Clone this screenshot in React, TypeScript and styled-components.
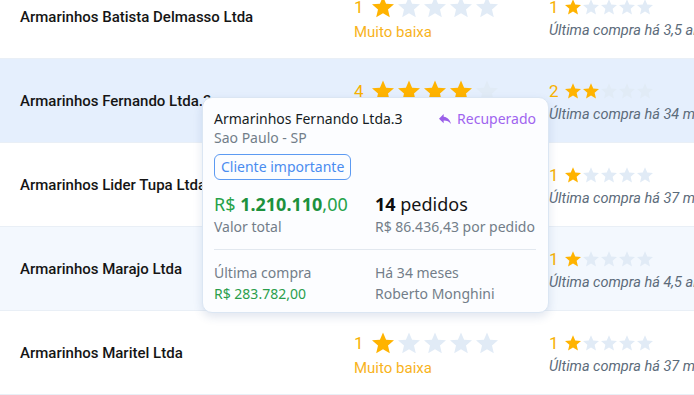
import React from 'react'
import styled, { createGlobalStyle } from 'styled-components'

const GlobalStyle = createGlobalStyle`
  html, body {
    margin: 0;
    padding: 0;
    background: #ffffff;
    overflow: hidden;
  }
  body {
    font-family: Roboto, 'Liberation Sans', sans-serif;
  }
`

const ORANGE = '#f7b100'
const STAR_OFF = '#e1ebf6'

const List = styled.div`
  margin-top: -25px;
  width: 694px;
`

const Row = styled.div<{ $bg: string }>`
  position: relative;
  display: grid;
  grid-template-columns: 334px 195px 1fr;
  align-items: center;
  height: 84px;
  box-sizing: border-box;
  padding-left: 20px;
  background: ${(p) => p.$bg};
  border-bottom: 1px solid #e9eff6;
  white-space: nowrap;
`

const Name = styled.div`
  font-size: 15px;
  font-weight: 500;
  color: #151515;
`

const Rating = styled.div`
  display: flex;
  flex-direction: column;
  gap: 5px;
  margin-top: 4px;
`

const StarLine = styled.div<{ $gap: number }>`
  display: flex;
  align-items: center;
  gap: ${(p) => p.$gap}px;
`

const Num = styled.span<{ $size: number }>`
  font-size: ${(p) => p.$size}px;
  color: ${ORANGE};
  margin-right: 4px;
  line-height: 1;
`

const Label = styled.div`
  font-size: 15px;
  color: #f8b31c;
`

const LastBuy = styled.div`
  display: flex;
  flex-direction: column;
  gap: 6px;
  margin-top: 4px;
  overflow: hidden;
`

const Italic = styled.div`
  font-size: 14.5px;
  font-style: italic;
  color: #5c6b7a;
`

const Star = ({ on, size }: { on: boolean; size: number }) => (
  <svg width={size} height={size} viewBox="2 2 20 19.3" style={{ display: 'block' }}>
    <path
      d="M12 17.27L18.18 21l-1.64-7.03L22 9.24l-7.19-.61L12 2 9.19 8.63 2 9.24l5.46 4.73L5.82 21z"
      fill={on ? '#ffb300' : STAR_OFF}
    />
  </svg>
)

const Stars = ({ n, size, gap, numSize }: { n: number; size: number; gap: number; numSize: number }) => (
  <StarLine $gap={gap}>
    <Num $size={numSize}>{n}</Num>
    {[1, 2, 3, 4, 5].map((i) => (
      <Star key={i} on={i <= n} size={size} />
    ))}
  </StarLine>
)

/* tooltip */

const Tip = styled.div`
  position: absolute;
  left: 202px;
  top: 38px;
  z-index: 5;
  width: 347px;
  box-sizing: border-box;
  padding: 11px 12px 8px 11px;
  background: #fcfdff;
  border: 1px solid #dbe6f3;
  border-radius: 10px;
  box-shadow: 0 4px 10px rgba(40, 80, 140, 0.14);
  font-family: 'Noto Sans', 'Open Sans', sans-serif;
  white-space: nowrap;
`

const TipHead = styled.div`
  display: flex;
  justify-content: space-between;
  align-items: center;
  line-height: 20px;
`

const TipTitle = styled.div`
  font-size: 14px;
  color: #161c23;
`

const Recovered = styled.div`
  display: flex;
  align-items: center;
  gap: 6px;
  font-size: 14px;
  color: #a064ef;
`

const City = styled.div`
  font-size: 14px;
  line-height: 18px;
  color: #727d89;
`

const Badge = styled.div`
  display: inline-block;
  margin-top: 7px;
  padding: 3px 6px;
  font-size: 14px;
  line-height: 18px;
  color: #4a8cf0;
  border: 1px solid #5c9af2;
  border-radius: 6px;
`

const Grid = styled.div`
  display: grid;
  grid-template-columns: 1fr 1fr;
`

const Big = styled.div<{ $green?: boolean }>`
  font-size: 18px;
  line-height: 24px;
  color: ${(p) => (p.$green ? '#25a249' : '#141414')};
  margin-top: 12px;
  b {
    font-weight: 700;
    color: ${(p) => (p.$green ? '#1c913d' : '#0d0d0d')};
  }
`

const Sub = styled.div<{ $green?: boolean }>`
  font-size: 14px;
  line-height: 21px;
  color: ${(p) => (p.$green ? '#2a9e4c' : '#737d89')};
`

const Divider = styled.div`
  height: 1px;
  background: #e2e8ef;
  margin: 12px 0 12px;
`

const ReplyIcon = () => (
  <svg width="12" height="12" viewBox="3 5 18 15">
    <path d="M10 9V5l-7 7 7 7v-4.1c5 0 8.5 1.6 11 5.1-1-5-4-10-11-11z" fill="#9a5fe9" />
  </svg>
)

const Tooltip = () => (
  <Tip>
    <TipHead>
      <TipTitle>Armarinhos Fernando Ltda.3</TipTitle>
      <Recovered>
        <ReplyIcon />
        Recuperado
      </Recovered>
    </TipHead>
    <City>Sao Paulo - SP</City>
    <Badge>Cliente importante</Badge>
    <Grid>
      <div>
        <Big $green>
          R$ <b>1.210.110</b>,00
        </Big>
        <Sub>Valor total</Sub>
      </div>
      <div>
        <Big>
          <b>14</b> pedidos
        </Big>
        <Sub>R$ 86.436,43 por pedido</Sub>
      </div>
    </Grid>
    <Divider />
    <Grid>
      <div>
        <Sub>Última compra</Sub>
        <Sub $green>R$ 283.782,00</Sub>
      </div>
      <div>
        <Sub>Há 34 meses</Sub>
        <Sub>Roberto Monghini</Sub>
      </div>
    </Grid>
  </Tip>
)

const rows = [
  { name: 'Armarinhos Batista Delmasso Ltda', rate: 1, label: 'Muito baixa', freq: 1, last: 'Última compra há 3,5 anos', bg: '#ffffff' },
  { name: 'Armarinhos Fernando Ltda.3', rate: 4, label: 'Alta', freq: 2, last: 'Última compra há 34 meses', bg: '#e5effd', tip: true },
  { name: 'Armarinhos Lider Tupa Ltda', rate: 1, label: 'Muito baixa', freq: 1, last: 'Última compra há 37 meses', bg: '#ffffff' },
  { name: 'Armarinhos Marajo Ltda', rate: 1, label: 'Muito baixa', freq: 1, last: 'Última compra há 4,5 anos', bg: '#f3f8fe' },
  { name: 'Armarinhos Maritel Ltda', rate: 1, label: 'Muito baixa', freq: 1, last: 'Última compra há 37 meses', bg: '#ffffff' },
]

export default function App() {
  return (
    <>
      <GlobalStyle />
      <List>
        {rows.map((r) => (
          <Row key={r.name} $bg={r.bg}>
            <Name>{r.name}</Name>
            <Rating>
              <Stars n={r.rate} size={22} gap={4} numSize={17} />
              <Label>{r.label}</Label>
            </Rating>
            <LastBuy>
              <Stars n={r.freq} size={16} gap={2} numSize={17} />
              <Italic>{r.last}</Italic>
            </LastBuy>
            {r.tip && <Tooltip />}
          </Row>
        ))}
      </List>
    </>
  )
}
